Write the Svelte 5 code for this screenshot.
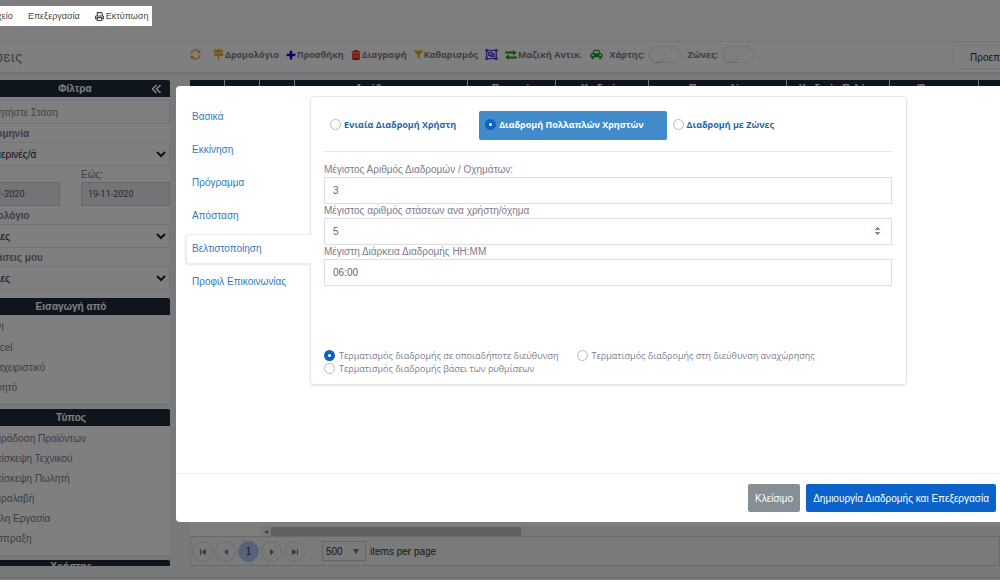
<script lang="ts">
  const columns = [
    { title: '', width: 34 },
    { title: '', width: 35 },
    { title: '', width: 35 },
    { title: 'Διεύθυνση', width: 173 },
    { title: 'Περιοχή', width: 88 },
    { title: 'Κωδικός', width: 93 },
    { title: 'Παραγγελία', width: 138 },
    { title: 'Κωδικός Πελάτη', width: 103 },
    { title: 'Όνομα', width: 89 },
    { title: '', width: 60 },
  ];

  const sources = ['API', 'Excel', 'Διαχειριστικό', 'Κινητό'];

  const types = [
    'Παράδοση Προϊόντων',
    'Επίσκεψη Τεχνικού',
    'Επίσκεψη Πωλητή',
    'Παραλαβή',
    'Άλλη Εργασία',
    'Είσπραξη',
  ];

  const tabs = ['Βασικά', 'Εκκίνηση', 'Πρόγραμμα', 'Απόσταση', 'Βελτιστοποίηση', 'Προφιλ Επικοινωνίας'];

  const modes = [
    { value: 'single', label: 'Ενιαία Διαδρομή Χρήστη' },
    { value: 'multi', label: 'Διαδρομή Πολλαπλών Χρηστών' },
    { value: 'zones', label: 'Διαδρομή με Ζώνες' },
  ];

  const endings = [
    { value: 'any', label: 'Τερματισμός διαδρομής σε οποιαδήποτε διεύθυνση' },
    { value: 'start', label: 'Τερματισμός διαδρομής στη διεύθυνση αναχώρησης' },
    { value: 'settings', label: 'Τερματισμός διαδρομής βάσει των ρυθμίσεων' },
  ];

  let activeTab = $state('Βελτιστοποίηση');
  let mode = $state('multi');
  let ending = $state('any');
  let maxRoutes = $state('3');
  let maxStops = $state(5);
  let maxDuration = $state('06:00');
  let showMap = $state(false);
  let showZones = $state(false);
</script>

<div class="shell">
  <header class="topbar">
    <nav class="menu">
      <a href="#file">Αρχείο</a>
      <a href="#edit">Επεξεργασία</a>
      <a href="#print">
        <svg width="9" height="9" viewBox="0 0 16 16" fill="none" stroke="currentColor" stroke-width="2">
          <path d="M4 7V1h7l2 2v4M4 12H1V8q0-1 1-1h12q1 0 1 1v4h-3M4 10h8v5H4z" />
        </svg>
        Εκτύπωση
      </a>
    </nav>
  </header>

  <div class="toolbar">
    <h1>Στάσεις</h1>
    <div class="tools">
      <button type="button" class="tool refresh" aria-label="Ανανέωση">
        <svg width="11" height="11" viewBox="0 0 16 16" fill="none" stroke="#f0a030" stroke-width="2">
          <path d="M2 7a6 6 0 0 1 11-3M14 9a6 6 0 0 1-11 3" />
          <path d="M15 1v5h-5zM1 15v-5h5z" fill="#f0a030" stroke="none" />
        </svg>
      </button>
      <button type="button" class="tool">
        <svg width="11" height="11" viewBox="0 0 16 16" fill="#f5a623">
          <path d="M7 0h2v1h4l2 2-2 2H1V1h6zM3 6h12v4H3L1 8zM7 10h2v6H7z" />
        </svg>
        Δρομολόγιο
      </button>
      <button type="button" class="tool">
        <svg width="10" height="10" viewBox="0 0 16 16" fill="#0a00e0">
          <path d="M6 1h4v5h5v4h-5v5H6v-5H1V6h5z" />
        </svg>
        Προσθήκη
      </button>
      <button type="button" class="tool">
        <svg width="10" height="10" viewBox="0 0 16 16">
          <path d="M1 2h4l1-2h4l1 2h4v2H1zM2 5h12v9q0 2-2 2H4q-2 0-2-2z" fill="#f01010" />
          <path d="M5 7v6M8 7v6M11 7v6" stroke="#fff" stroke-width="1" />
        </svg>
        Διαγραφή
      </button>
      <button type="button" class="tool">
        <svg width="9" height="9" viewBox="0 0 16 16" fill="#f0a800">
          <path d="M0 1h16v1l-6 6v8l-4-3V8L0 2z" />
        </svg>
        Καθαρισμός
      </button>
      <button type="button" class="tool" aria-label="Ομαδοποίηση">
        <svg width="13" height="11" viewBox="0 0 18 16" fill="none" stroke="#5a48e0" stroke-width="2">
          <path d="M3 2h12M3 14h12M2 3v10M16 3v10M5 5h5v4H5zM8 10v1h5V7h-2" />
          <path d="M0 0h4v4H0zM14 0h4v4h-4zM0 12h4v4H0zM14 12h4v4h-4z" fill="#5a48e0" stroke="none" />
        </svg>
      </button>
      <button type="button" class="tool">
        <svg width="12" height="10" viewBox="0 0 16 14" fill="#1c9a1c">
          <path d="M0 2h11V0l5 4-5 4V5H0zM16 9H5V6l-5 4 5 4v-2h11z" />
        </svg>
        Μαζική Αντικ.
      </button>
      <button type="button" class="tool" aria-label="Οχήματα">
        <svg width="13" height="11" viewBox="0 0 18 16" fill="#1c9a1c" fill-rule="evenodd">
          <path d="M3 6l2-5h8l2 5q3 0 3 3v3h-2v3h-3v-3H5v3H2v-3H0V9q0-3 3-3zM5 6h8l-1-3H6zM2 9a1 1 0 0 0 3 0 1 1 0 0 0-3 0zM13 9a1 1 0 0 0 3 0 1 1 0 0 0-3 0z" />
        </svg>
      </button>
      <label class="switch">Χάρτης: <input type="checkbox" bind:checked={showMap} /></label>
      <label class="switch">Ζώνες: <input type="checkbox" bind:checked={showZones} /></label>
    </div>
    <button type="button" class="preset">Προεπιλογή</button>
  </div>

  <div class="workspace">
    <aside class="sidebar">
      <h2>
        Φίλτρα
        <svg width="9" height="10" viewBox="0 0 9 10" fill="none" stroke="currentColor" stroke-width="1.6">
          <path d="M4.500 1l-4 4 4 4M8.500 1l-4 4 4 4" />
        </svg>
      </h2>
      <div class="filters">
        <input type="text" class="control" placeholder="Αναζητήστε Στάση" aria-label="Αναζητήστε Στάση" />
        <label class="caption" for="period">Ημερομηνία</label>
        <select id="period" class="control">
          <option>Ημερινές/ά</option>
        </select>
        <div class="dates">
          <label>Από: <input type="text" value="19-11-2020" /></label>
          <label>Εώς: <input type="text" value="19-11-2020" /></label>
        </div>
        <label class="caption" for="route">Δρομολόγιο</label>
        <select id="route" class="control">
          <option>Όλες</option>
        </select>
        <label class="caption" for="mine">Οι στάσεις μου</label>
        <select id="mine" class="control">
          <option>Όλες</option>
        </select>
      </div>

      <h2>Εισαγωγή από</h2>
      <div class="checks">
        {#each sources as source}
          <label><input type="checkbox" /> {source}</label>
        {/each}
      </div>

      <h2>Τύπος</h2>
      <div class="checks">
        {#each types as type}
          <label><input type="checkbox" /> {type}</label>
        {/each}
      </div>

      <h2 class="cut">Χρήστης</h2>
    </aside>

    <main class="grid">
      <table>
        <colgroup>
          {#each columns as column}
            <col style="width: {column.width}px" />
          {/each}
        </colgroup>
        <thead>
          <tr>
            {#each columns as column}
              <th>{column.title}</th>
            {/each}
          </tr>
        </thead>
      </table>
      <div class="rows"></div>
      <div class="scroll">
        <span class="locked"></span>
        <span class="arrow">◂</span>
        <span class="thumb"></span>
      </div>
      <footer class="pager">
        <button type="button" aria-label="Πρώτη">
          <svg width="6" height="6" viewBox="0 0 6 6"><path d="M0 0h1v6H0zM6 0v6L1 3z" /></svg>
        </button>
        <button type="button" aria-label="Προηγούμενη">
          <svg width="6" height="6" viewBox="0 0 6 6"><path d="M5 0v6L1 3z" /></svg>
        </button>
        <button type="button" class="current">1</button>
        <button type="button" aria-label="Επόμενη">
          <svg width="6" height="6" viewBox="0 0 6 6"><path d="M1 0v6l4-3z" /></svg>
        </button>
        <button type="button" aria-label="Τελευταία">
          <svg width="6" height="6" viewBox="0 0 6 6"><path d="M5 0h1v6H5zM0 0v6l5-3z" /></svg>
        </button>
        <label>
          <span class="size">
            <select>
              <option>500</option>
            </select>
            <svg width="6" height="5" viewBox="0 0 6 5"><path d="M0 0h6L3 5z" /></svg>
          </span>
          items per page
        </label>
      </footer>
    </main>
  </div>
</div>

<div class="backdrop"></div>

<div class="modal" role="dialog" aria-modal="true" aria-label="Δημιουργία Διαδρομής">
  <div class="modal-body">
    <nav class="tabs">
      {#each tabs as tab}
        <a href="#tab" class:active={tab === activeTab} onclick={() => (activeTab = tab)}>{tab}</a>
      {/each}
    </nav>

    <form class="card">
      <div class="modes">
        {#each modes as item}
          <label class="mode" class:selected={mode === item.value}>
            <input type="radio" name="mode" value={item.value} bind:group={mode} />
            {item.label}
          </label>
        {/each}
      </div>

      <div class="fields">
        <label for="max-routes">Μέγιστος Αριθμός Διαδρομών / Οχημάτων:</label>
        <input id="max-routes" type="text" bind:value={maxRoutes} />
        <label for="max-stops">Μέγιστος αριθμός στάσεων ανα χρήστη/όχημα</label>
        <input id="max-stops" type="number" bind:value={maxStops} />
        <label for="max-duration">Μέγιστη Διάρκεια Διαδρομής HH:MM</label>
        <input id="max-duration" type="text" bind:value={maxDuration} />
      </div>

      <div class="endings">
        {#each endings as item}
          <label>
            <input type="radio" name="ending" value={item.value} bind:group={ending} />
            {item.label}
          </label>
        {/each}
      </div>
    </form>
  </div>

  <div class="modal-footer">
    <button type="button" class="btn btn-secondary">Κλείσιμο</button>
    <button type="button" class="btn btn-primary">Δημιουργία Διαδρομής και Επεξεργασία</button>
  </div>
</div>

<style>
  :global(body) {
    background: #eef3f7;
    overflow: hidden;
    font-family: 'Liberation Sans', Arial, sans-serif;
    font-size: 10px;
    color: #7c7c8c;
  }

  input,
  select,
  button {
    font: inherit;
    color: inherit;
    margin: 0;
    box-sizing: border-box;
  }

  button {
    border: 0;
    padding: 0;
    background: none;
    white-space: nowrap;
  }

  a {
    text-decoration: none;
  }

  .shell {
    margin-left: -28px;
  }

  .topbar {
    height: 35px;
    padding-top: 6px;
    background: #fff;
    border-bottom: 1px solid #e4e8ec;
  }

  .menu {
    position: relative;
    z-index: 3;
    display: inline-flex;
    align-items: center;
    gap: 15px;
    height: 20px;
    padding: 0 4px 0 14px;
    background: #fff;
    font-size: 9px;
  }

  .menu a {
    display: flex;
    align-items: center;
    gap: 2px;
    color: #444;
  }

  .toolbar {
    display: grid;
    grid-template-columns: 198px 1fr 47px;
    column-gap: 20px;
    align-items: center;
    height: 30px;
    background: #fff;
    border-bottom: 2px solid #dfe6ec;
  }

  h1 {
    margin: 0;
    font-family: Roboto, sans-serif;
    font-size: 14px;
    font-weight: 400;
    color: #7c7c8c;
  }

  .tools {
    display: flex;
    align-items: center;
    gap: 7px;
    padding-bottom: 5px;
    font-family: 'Open Sans', sans-serif;
    font-size: 9px;
    font-weight: 700;
    white-space: nowrap;
  }

  .tool,
  .switch {
    display: flex;
    align-items: center;
    gap: 1px;
  }

  .refresh {
    padding-right: 5px;
  }

  .switch {
    gap: 4px;
  }

  .switch input {
    appearance: none;
    width: 32px;
    height: 17px;
    border: 1px solid #e6e6ea;
    border-radius: 9px;
  }

  .switch input::before {
    content: '';
    display: block;
    width: 15px;
    height: 15px;
    border-radius: 50%;
    box-shadow: 0 1px 2px #ccc;
  }

  .switch input:checked::before {
    margin-left: auto;
  }

  .preset {
    width: 90px;
    height: 24px;
    padding: 0 16px;
    border: 1px solid #eee;
    border-radius: 3px;
    color: #333;
    text-align: left;
  }

  .workspace {
    display: grid;
    grid-template-columns: 198px 1fr;
    column-gap: 20px;
    padding: 6px 0 11px;
    border-bottom: 1px solid #ccd2d8;
  }

  .sidebar h2 {
    display: flex;
    align-items: center;
    justify-content: center;
    gap: 60px;
    height: 17px;
    margin: 0;
    border-radius: 2px 2px 0 0;
    background: #1f2b3b;
    color: #fff;
    font-size: 10px;
    font-weight: 700;
  }

  .sidebar h2 svg {
    margin-right: -77px;
  }

  .sidebar .cut {
    height: 6px;
    line-height: 14px;
    align-items: flex-start;
    overflow: hidden;
  }

  .filters {
    display: flex;
    flex-direction: column;
    padding: 3px 0 8px;
    background: #fff;
  }

  .control {
    width: 100%;
    height: 24px;
    padding: 0 4px;
    border: 1px solid #e8e8ec;
    background: #fff;
  }

  .control::placeholder {
    color: #8a8a94;
  }

  select.control {
    color: #222;
    padding: 0 0 0 11px;
  }

  .caption {
    height: 18px;
    line-height: 20px;
    font-weight: 700;
  }

  .dates {
    display: grid;
    grid-template-columns: 88px 89px;
    justify-content: space-between;
    padding-top: 2px;
  }

  .dates label {
    line-height: 14px;
  }

  .dates input {
    display: block;
    width: 100%;
    height: 24px;
    padding: 0 6px;
    border: 1px solid #ccd2d8;
    background: #e4e9ee;
    font-family: Roboto, sans-serif;
    font-size: 9px;
    color: #555;
  }

  .checks {
    padding: 2px 2px 7px;
    margin-bottom: 4px;
    background: #fff;
    border-bottom: 1px solid #dde2e6;
  }

  .checks label {
    display: flex;
    align-items: center;
    gap: 4px;
    height: 20px;
  }

  .checks input {
    width: 10px;
    height: 10px;
  }

  .grid {
    display: flex;
    flex-direction: column;
    min-width: 0;
    overflow: hidden;
  }

  table {
    width: 100%;
    table-layout: fixed;
    border-collapse: collapse;
    background: #1f2b3b;
    color: #fff;
  }

  th {
    height: 17px;
    padding: 0;
    border-right: 1px solid #dfe6ec;
    font-size: 10px;
    line-height: 12px;
  }

  .rows {
    flex: 1;
    background: #fff;
  }

  .scroll {
    display: flex;
    align-items: center;
    height: 10px;
    background: #f1f1f1;
  }

  .locked {
    width: 70px;
    height: 10px;
    background: #fff;
  }

  .arrow {
    width: 11px;
    text-align: center;
    font-size: 8px;
  }

  .thumb {
    width: 250px;
    height: 9px;
    background: #c1c1c1;
  }

  .pager {
    display: flex;
    align-items: center;
    height: 28px;
    padding-left: 1px;
    border: 1px solid #d0d4d8;
    background: #f3f4f5;
    color: #333;
  }

  .pager button {
    width: 21px;
    height: 21px;
    margin-right: 2px;
    border: 1px solid #dcdcdc;
    border-radius: 50%;
  }

  .pager .current {
    border-color: #a8c8f8;
    background: #a8c8f8;
  }

  .pager svg {
    fill: #777;
  }

  .pager label {
    display: flex;
    align-items: center;
    gap: 4px;
    margin-left: 15px;
  }

  .size {
    display: flex;
    align-items: center;
    width: 44px;
    height: 20px;
    box-sizing: border-box;
    padding-right: 6px;
    border: 1px solid #c8c8c8;
  }

  .size select {
    appearance: none;
    flex: 1;
    min-width: 0;
    padding: 0 3px;
    border: 0;
    background: none;
  }

  .backdrop {
    position: fixed;
    inset: 0;
    z-index: 2;
    background: rgba(0, 0, 0, 0.5);
  }

  .modal {
    position: fixed;
    top: 86px;
    left: 176px;
    right: 0;
    z-index: 4;
    background: #fff;
    border-radius: 4px 0 0 4px;
  }

  .modal-body {
    display: grid;
    grid-template-columns: 124px 1fr;
    padding: 10px 93px 88px 10px;
  }

  .tabs {
    display: flex;
    flex-direction: column;
    gap: 3px;
    padding-top: 6px;
  }

  .tabs a {
    box-sizing: border-box;
    height: 30px;
    padding-left: 5px;
    border: 1px solid transparent;
    border-right: 0;
    border-radius: 4px 0 0 4px;
    line-height: 28px;
    color: #337ab7;
  }

  .tabs .active {
    position: relative;
    z-index: 1;
    margin-right: -1px;
    border-color: #ececf0;
    background: #fff;
    box-shadow: -1px 1px 2px #e4e4e8;
  }

  .card {
    padding: 14px 14px 9px 13px;
    border: 1px solid #e6e6ea;
    border-radius: 4px;
    box-shadow: 0 1px 2px #e4e4e8;
  }

  .modes {
    display: flex;
    padding-bottom: 11px;
    border-bottom: 1px solid #e6e6ea;
    font-family: 'Open Sans', sans-serif;
    font-size: 9px;
    font-weight: 700;
    color: #1e68a8;
  }

  .mode {
    box-sizing: border-box;
    display: flex;
    align-items: center;
    gap: 3px;
    height: 29px;
    padding: 0 23px 2px 6px;
    border-radius: 2px;
  }

  .mode.selected {
    background: #428bca;
    color: #fff;
  }

  input[type='radio'] {
    appearance: none;
    flex: none;
    width: 11px;
    height: 11px;
    border: 1px solid #b8b8c0;
    border-radius: 50%;
    background: #fff;
  }

  input[type='radio']:checked {
    border: 4px solid #0b62c1;
  }

  .fields {
    display: flex;
    flex-direction: column;
    padding: 11px 0 63px;
  }

  .fields label {
    line-height: 14px;
  }

  .fields input {
    height: 27px;
    padding: 0 6px 0 8px;
    border: 1px solid #dedee2;
    color: #666;
  }

  .fields input::-webkit-inner-spin-button {
    opacity: 1;
  }

  .endings {
    display: flex;
    flex-wrap: wrap;
    column-gap: 18px;
    font-family: 'Open Sans', sans-serif;
    font-size: 9px;
  }

  .endings label {
    display: flex;
    align-items: center;
    gap: 4px;
    height: 13px;
  }

  .modal-footer {
    display: flex;
    justify-content: flex-end;
    gap: 6px;
    padding: 10px 4px;
    border-top: 1px solid #eee;
  }

  .btn {
    height: 28px;
    padding: 0 7px;
    border-radius: 2px;
    color: #fff;
  }

  .btn-secondary {
    background: #868e96;
  }

  .btn-primary {
    background: #0b62c8;
  }
</style>
